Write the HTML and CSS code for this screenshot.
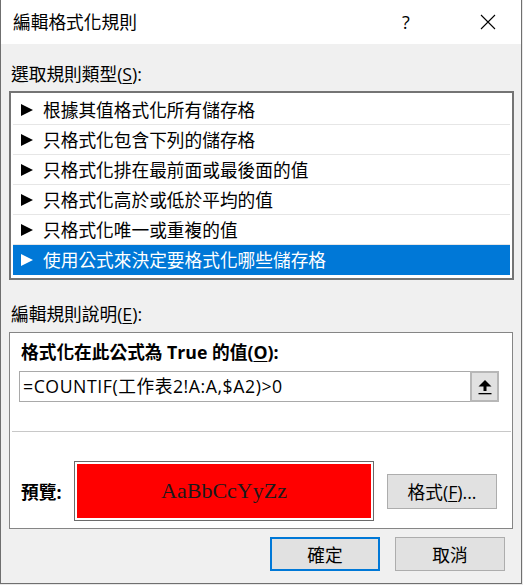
FILE: index.html
```html
<!DOCTYPE html>
<html lang="zh-Hant">
<head>
  <meta charset="utf-8">
  <title>編輯格式化規則</title>
  <link rel="stylesheet" href="styles.css">
</head>
<body>
  <div class="dialog">
    <div class="titlebar">
      <span class="title">編輯格式化規則</span>
      <span class="help">?</span>
      <span class="close">
        <svg width="16" height="16" viewBox="0 0 16 16">
          <path d="M1 1 L15 15 M15 1 L1 15" stroke="#000" stroke-width="1.1" fill="none"/>
        </svg>
      </span>
    </div>

    <div class="content">
      <div class="label">選取規則類型(<u>S</u>):</div>
      <ul class="rule-list">
        <li><span class="arrow"></span>根據其值格式化所有儲存格</li>
        <li><span class="arrow"></span>只格式化包含下列的儲存格</li>
        <li><span class="arrow"></span>只格式化排在最前面或最後面的值</li>
        <li><span class="arrow"></span>只格式化高於或低於平均的值</li>
        <li><span class="arrow"></span>只格式化唯一或重複的值</li>
        <li class="selected"><span class="arrow"></span>使用公式來決定要格式化哪些儲存格</li>
      </ul>

      <div class="label label-edit">編輯規則說明(<u>E</u>):</div>
      <div class="group">
        <div class="group-title">格式化在此公式為 True 的值(<u>O</u>):</div>
        <div class="formula">
          <span class="formula-text">=COUNTIF(工作表2!A:A,$A2)&gt;0</span>
          <span class="ref-btn">
            <svg width="14" height="16" viewBox="0 0 14 16">
              <path d="M0.5 7.5 L7 1 L13.5 7.5 Z" fill="#000"/>
              <rect x="5.5" y="7" width="3" height="5" fill="#000"/>
              <rect x="0.5" y="14" width="13" height="1.3" fill="#000"/>
            </svg>
          </span>
        </div>
        <div class="divider"></div>
        <div class="preview-row">
          <span class="preview-label">預覽:</span>
          <div class="preview-box">
            <div class="preview-fill">AaBbCcYyZz</div>
          </div>
          <button class="btn btn-format">格式(<u>F</u>)...</button>
        </div>
      </div>

      <div class="actions">
        <button class="btn btn-primary">確定</button>
        <button class="btn">取消</button>
      </div>
    </div>
  </div>
</body>
</html>
```

FILE: styles.css
```css
* {
  margin: 0;
  padding: 0;
  box-sizing: border-box;
}

body {
  font-family: "Open Sans", "Noto Sans CJK TC", sans-serif;
  font-size: 17.7px;
  color: #000;
  background: #e8e8e8;
}

u {
  text-decoration: underline;
  text-underline-offset: 2px;
}

.dialog {
  width: 522px;
  height: 584px;
  background: #f0f0f0;
  border: 1px solid #6f6f6f;
  border-top: none;
  display: flex;
  flex-direction: column;
}

.titlebar {
  height: 44px;
  background: #fff;
  display: flex;
  align-items: center;
  padding-left: 12px;
}

.title {
  flex: 1;
  line-height: 24px;
}

.help {
  width: 20px;
  font-size: 18px;
  line-height: 24px;
  margin-right: 58px;
}

.close {
  display: flex;
  width: 16px;
  margin-right: 25px;
}

.content {
  flex: 1;
  padding-top: 18px;
}

.label {
  line-height: 24px;
  height: 24px;
  margin-left: 10px;
}

.label-edit {
  margin-top: 22px;
}

.rule-list {
  list-style: none;
  width: 505px;
  margin: 5px 0 0 8px;
  background: #fff;
  border: 2px solid #747474;
  padding: 2px 2px 3px 2px;
}

.rule-list li {
  height: 30px;
  display: flex;
  align-items: center;
  padding-left: 8px;
  border-bottom: 1px solid #e6e6e6;
  line-height: 24px;
}

.rule-list li.selected {
  background: #0078d7;
  color: #fff;
  border-bottom: none;
}

.arrow {
  width: 0;
  height: 0;
  border-style: solid;
  border-width: 6px 0 6px 12px;
  border-color: transparent transparent transparent #000;
  margin-right: 10px;
}

.selected .arrow {
  border-left-color: #fff;
}

.group {
  width: 504px;
  height: 197px;
  margin: 6px 0 0 8px;
  background: #fff;
  border: 1px solid #858585;
}

.group-title {
  font-weight: bold;
  line-height: 24px;
  margin: 7px 0 0 11px;
}

.formula {
  display: flex;
  width: 480px;
  height: 31px;
  margin: 7px 0 0 9px;
  border: 1px solid #a9a9a9;
}

.formula-text {
  flex: 1;
  padding-left: 3px;
  line-height: 29px;
  letter-spacing: 0.55px;
}

.ref-btn {
  width: 29px;
  margin: -1px -1px -1px 0;
  background: #e1e1e1;
  border: 2px solid #b7b7b7;
  display: flex;
  align-items: center;
  justify-content: center;
}

.divider {
  height: 1px;
  margin: 29px 1px 0 2px;
  background: #c8c8c8;
}

.preview-row {
  display: flex;
  align-items: center;
  margin-top: 29px;
  padding-left: 11px;
}

.preview-label {
  width: 53px;
  font-weight: bold;
}

.preview-box {
  width: 300px;
  height: 60px;
  border: 1px solid #6a6a6a;
  padding: 2px;
}

.preview-fill {
  height: 100%;
  background: #ff0000;
  display: flex;
  align-items: center;
  justify-content: center;
  font-family: "Liberation Serif", serif;
  font-size: 22px;
  color: #1a1a1a;
}

.btn {
  font-family: inherit;
  font-size: inherit;
  color: #000;
  width: 110px;
  height: 34px;
  background: #e1e1e1;
  border: 1px solid #adadad;
}

.btn-format {
  margin-left: 13px;
  height: 35px;
}

.btn-primary {
  border: 2px solid #0078d7;
}

.actions {
  display: flex;
  justify-content: flex-end;
  gap: 15px;
  margin-top: 8px;
  padding-right: 16px;
}
```
